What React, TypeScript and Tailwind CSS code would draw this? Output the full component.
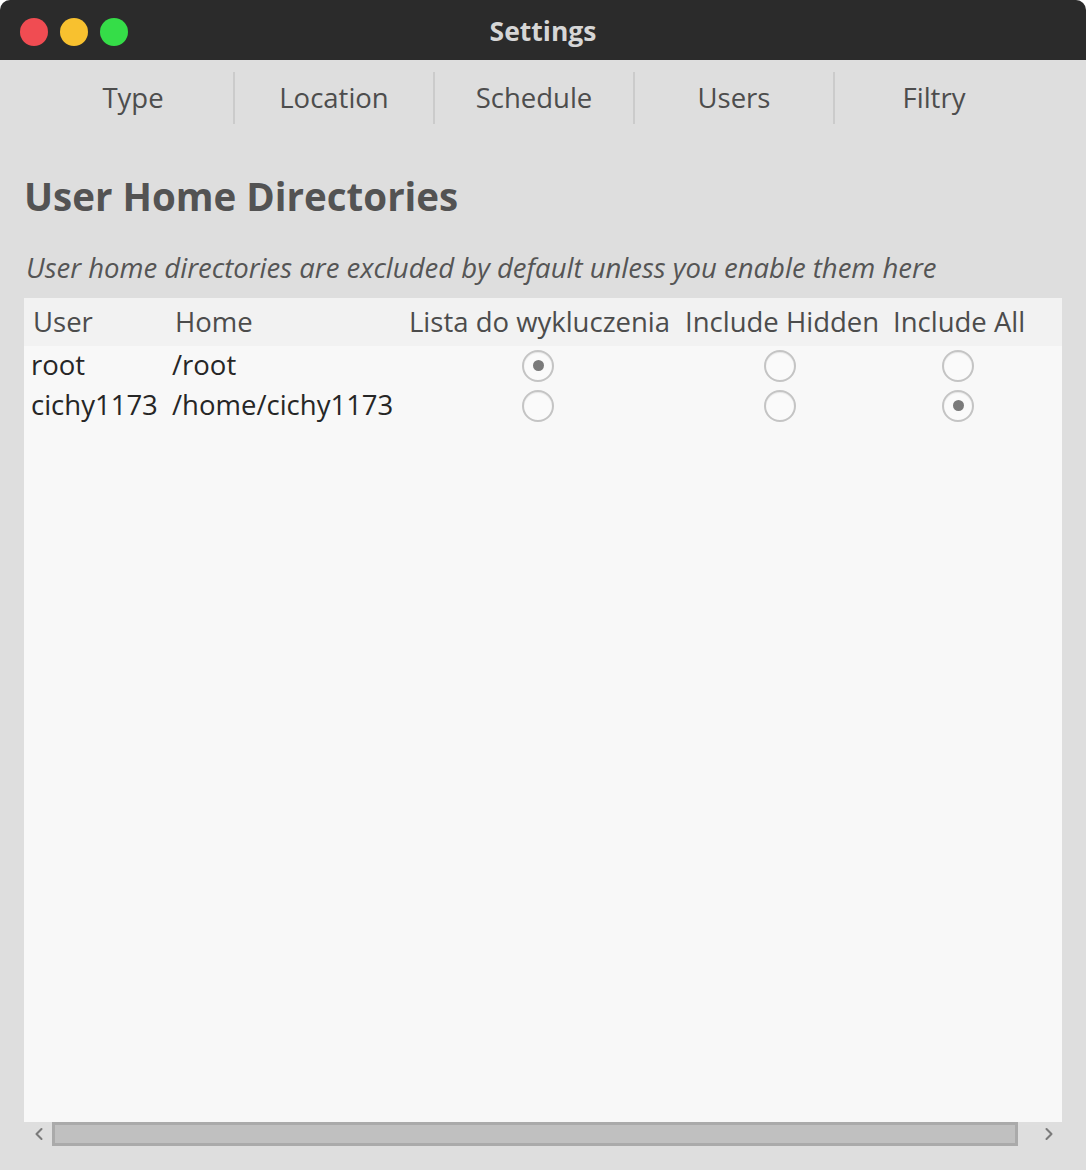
import { ChevronLeft, ChevronRight } from "lucide-react";

const tabs = ["Type", "Location", "Schedule", "Users", "Filtry"];

const rows = [
  { user: "root", home: "/root", sel: 0 },
  { user: "cichy1173", home: "/home/cichy1173", sel: 2 },
];

const cols = "grid grid-cols-[142px_234px_276px_208px_148px_1fr]";

function Radio({ on }: { on: boolean }) {
  return (
    <div className="w-[32px] h-[32px] rounded-full border-2 border-[#c4c4c4] bg-[#fafafa] shadow-[inset_0_1px_1px_rgba(0,0,0,0.08)] flex items-center justify-center">
      {on && <div className="w-[11px] h-[11px] rounded-full bg-[#7a7a7a]" />}
    </div>
  );
}

export default function App() {
  return (
    <div className="w-[1086px] h-[1170px] bg-white font-['Open_Sans',sans-serif]">
      <div className="h-full flex flex-col rounded-t-[10px] overflow-hidden bg-[#dedede]">
        {/* title bar */}
        <div className="relative h-[60px] bg-[#2b2b2b] flex items-center justify-center shrink-0">
          <div className="absolute left-[20px] top-[18px] flex gap-[12px]">
            <span className="w-[28px] h-[28px] rounded-full bg-[#f04c52]" />
            <span className="w-[28px] h-[28px] rounded-full bg-[#f8c12f]" />
            <span className="w-[28px] h-[28px] rounded-full bg-[#35dd48]" />
          </div>
          <span className="text-[26.5px] leading-[34px] mt-[2px] font-bold text-[#d6d6d6]">Settings</span>
        </div>

        {/* tabs */}
        <div className="flex pl-[33px] pt-[12px] h-[76px] shrink-0">
          {tabs.map((t, i) => (
            <div
              key={t}
              className={
                "w-[200px] h-[52px] flex items-center justify-center text-[27.5px] text-[#4d4d4d] " +
                (i > 0 ? "border-l-2 border-[#cbcbcb]" : "")
              }
            >
              {t}
            </div>
          ))}
        </div>

        <h1 className="pl-[24px] mt-[38px] text-[38.5px] leading-[44px] font-bold text-[#535353]">
          User Home Directories
        </h1>
        <p className="pl-[26px] mt-[33px] text-[27.5px] leading-[34px] italic text-[#555555]">
          User home directories are excluded by default unless you enable them here
        </p>

        {/* table */}
        <div className="mx-[24px] mt-[13px] flex-1 flex flex-col bg-[#f8f8f8]">
          <div className={cols + " h-[48px] bg-[#f2f2f2] items-center text-[27.5px] text-[#4c4c4c]"}>
            <div className="pl-[9px]">User</div>
            <div className="pl-[9px]">Home</div>
            <div className="pl-[9px]">Lista do wykluczenia</div>
            <div className="pl-[9px]">Include Hidden</div>
            <div className="pl-[9px]">Include All</div>
            <div />
          </div>
          <div className="flex-1">
            {rows.map((r) => (
              <div key={r.user} className={cols + " h-[40px] items-center text-[27.5px] text-[#262626]"}>
                <div className="pl-[7px] -mt-[2px]">{r.user}</div>
                <div className="pl-[6px] -mt-[2px]">{r.home}</div>
                {[0, 1, 2].map((c) => (
                  <div key={c} className="flex justify-center -mt-[1px]">
                    <Radio on={r.sel === c} />
                  </div>
                ))}
                <div />
              </div>
            ))}
          </div>
          {/* horizontal scrollbar */}
          <div className="h-[24px] -mx-[24px] bg-[#dedede] flex items-center">
            <div className="w-[52px] flex justify-end pr-[3px] text-[#7a7a7a]">
              <ChevronLeft size={20} strokeWidth={2.5} />
            </div>
            <div className="w-[966px] h-[24px] bg-[#c0c0c0] border-[3px] border-[#aaaaaa]" />
            <div className="flex-1 flex justify-center text-[#7a7a7a] pr-[6px]">
              <ChevronRight size={20} strokeWidth={2.5} />
            </div>
          </div>
        </div>
        <div className="h-[24px] shrink-0" />
      </div>
    </div>
  );
}
